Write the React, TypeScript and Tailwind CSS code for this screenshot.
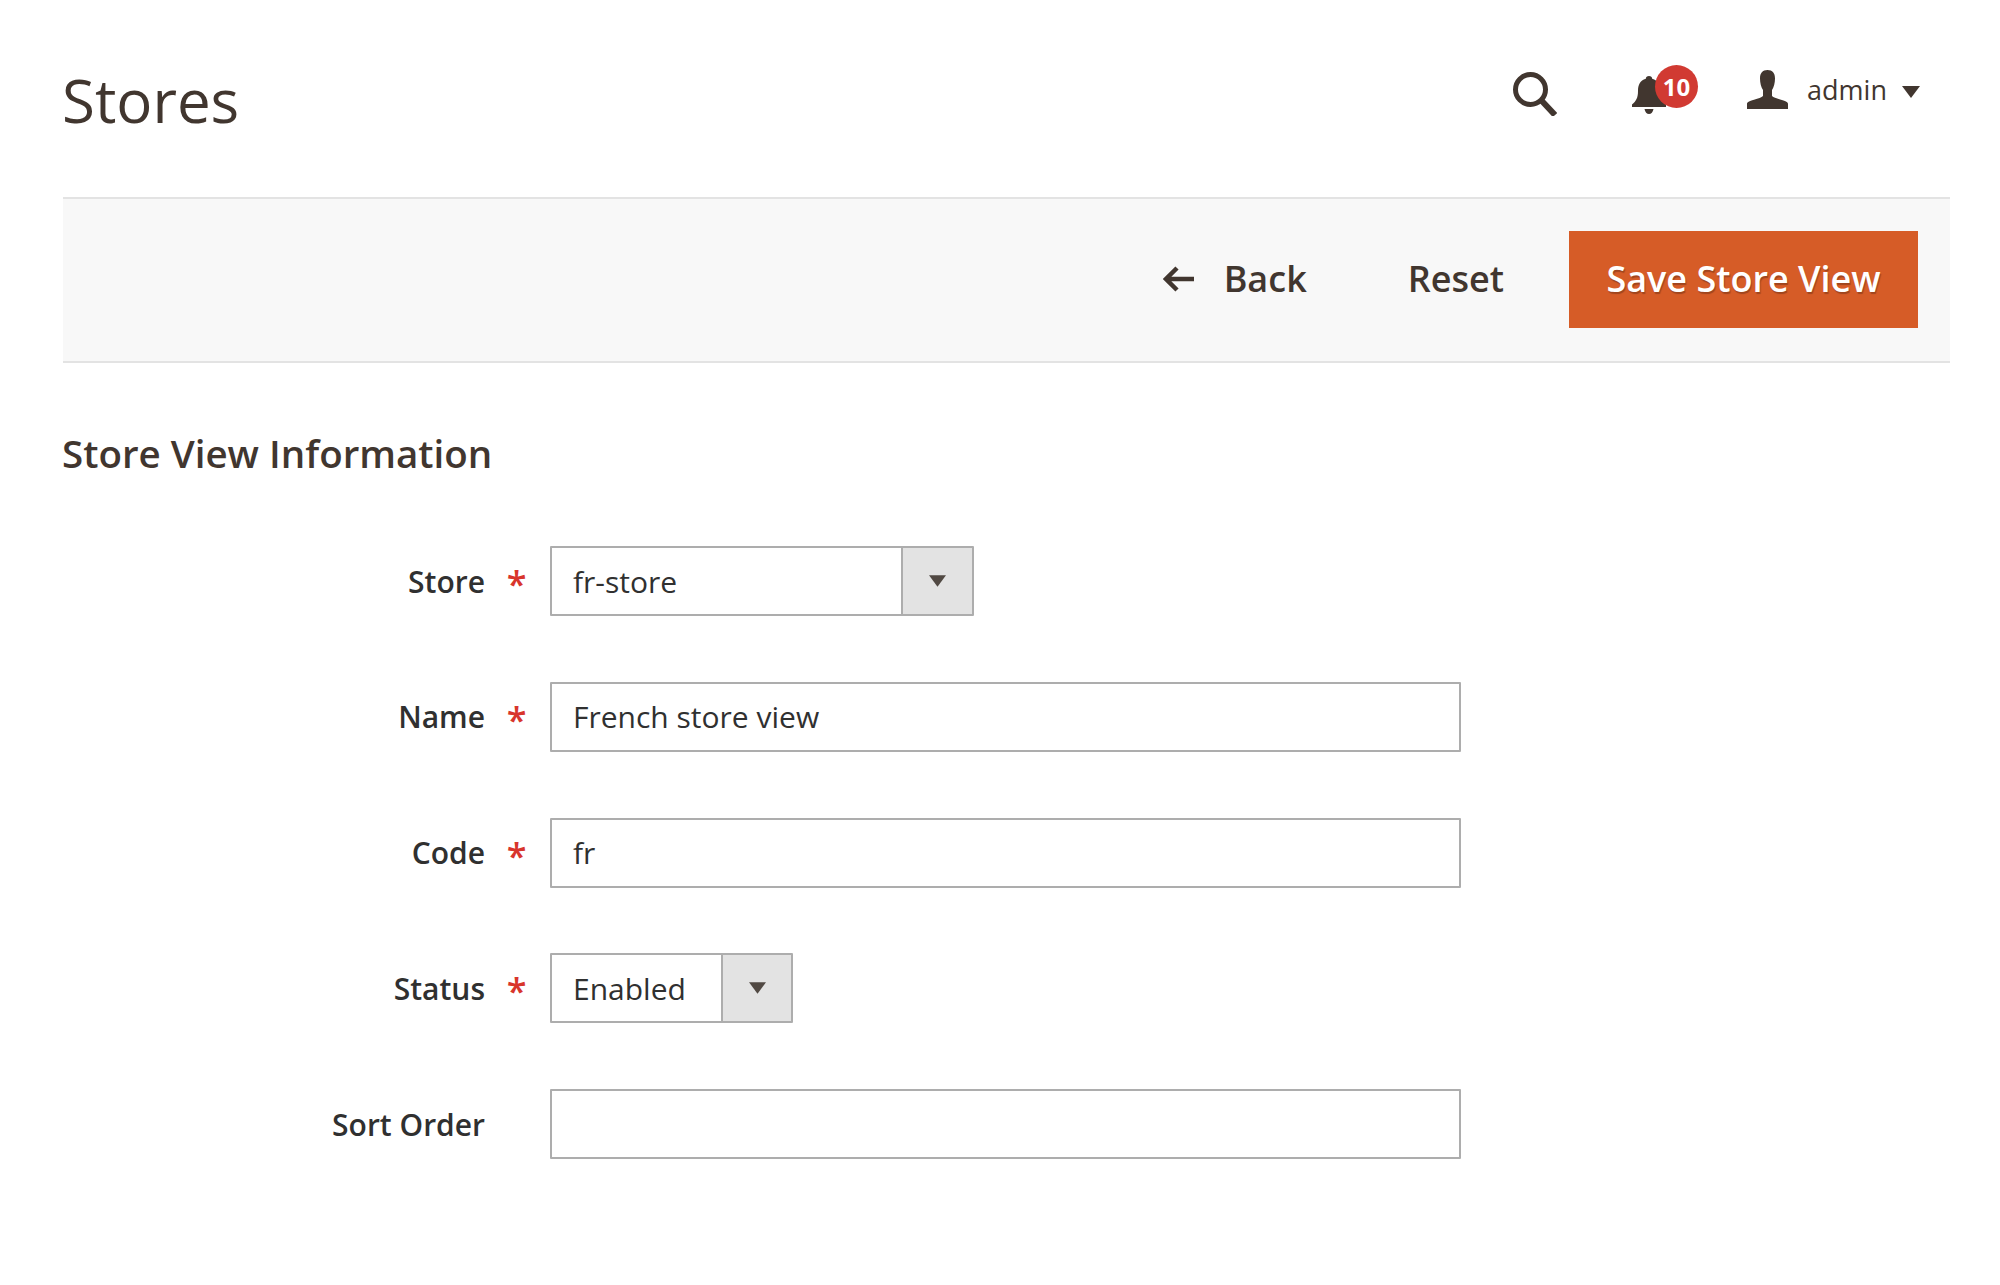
import React from "react"

const inputBox = "flex h-[70px] items-center rounded-[1px] border-2 border-[#adadad] bg-white pl-[21px] text-[30px] text-[#303030]"

function Caret({ className }: { className?: string }) {
  return (
    <svg viewBox="0 0 18 12" className={className} fill="currentColor">
      <path d="M0 0H18L9 12Z" />
    </svg>
  )
}

function SelectBox({ value, width, divider }: { value: string; width: string; divider: string }) {
  return (
    <div className={`flex h-[70px] items-stretch rounded-[1px] border-2 border-[#adadad] bg-white text-[30px] text-[#303030] ${width}`}>
      <div className={`flex items-center border-r-2 border-[#adadad] pl-[21px] ${divider}`}>{value}</div>
      <div className="flex flex-1 items-center justify-center bg-[#e3e3e3] text-[#514943]">
        <Caret className="h-[12px] w-[17px]" />
      </div>
    </div>
  )
}

function Row({ label, required, children }: { label: string; required?: boolean; children: React.ReactNode }) {
  return (
    <div className="flex items-center">
      <div className="w-[485px] text-right text-[30px] font-semibold text-[#303030]">{label}</div>
      <div className="flex w-[65px] justify-center pr-[2px] pt-[6px] text-[36px] leading-none font-semibold text-[#d8352c]">
        {required ? "*" : ""}
      </div>
      {children}
    </div>
  )
}

export default function App() {
  return (
    <div className="min-h-[1285px] bg-white font-['Open_Sans',sans-serif] text-[#41362f]">
      <header className="flex h-[197px] items-start pl-[62px] pr-[80px]">
        <h1 className="mt-[61px] text-[60px] leading-[78px] font-normal">Stores</h1>
        <div className="ml-auto mt-[65px] flex items-start">
          <svg viewBox="0 0 44 44" className="mt-[7px] h-[44px] w-[44px]" fill="none" stroke="currentColor">
            <circle cx="17.5" cy="17.5" r="15" strokeWidth="5" />
            <path d="M28 28L42 43" strokeWidth="6" />
          </svg>
          <div className="relative ml-[75px] h-[48px] w-[66px]">
            <svg viewBox="0 0 34 38" className="absolute left-0 top-[11px] h-[38px] w-[34px]" fill="currentColor">
              <path d="M17 0c2 0 3 1 3.2 2.8C26 4.4 28 9 28 15c0 7 2 10 6 13.500V31H0v-2.500C4 25 6 22 6 15 6 9 8 4.400 13.800 2.800 14 1 15 0 17 0Z" />
              <path d="M12.500 33h9c-.5 3-2.300 5-4.500 5s-4-2-4.500-5Z" />
            </svg>
            <span className="absolute left-[23px] top-0 flex h-[43px] w-[43px] items-center justify-center rounded-full bg-[#d13a32] text-[24px] leading-none font-bold text-white">
              10
            </span>
          </div>
          <svg viewBox="0 0 41 39" className="ml-[49px] mt-[5px] h-[39px] w-[41px]" fill="currentColor">
            <path d="M20.500 0c5 0 7.500 3 7.500 8.500 0 4.500-1.200 9-3 11.500v6c1.500 1.500 4.500 2.300 9 3.700 5 1.500 7 2.300 7 4.300V39H0v-5c0-2 2-2.800 7-4.300C11.500 28.300 14.500 27.500 16 26v-6c-1.800-2.500-3-7-3-11.500C13 3 15.500 0 20.500 0Z" />
          </svg>
          <span className="ml-[19px] mt-[3px] text-[27px] leading-[44px]">admin</span>
          <Caret className="ml-[15px] mt-[21px] h-[12px] w-[18px]" />
        </div>
      </header>

      <div className="ml-[63px] mr-[50px] flex h-[166px] items-center justify-end border-y-2 border-[#e3e3e3] bg-[#f8f8f8] pb-[2px] pr-[32px]">
        <svg viewBox="0 0 32 26" className="mr-[29px] h-[26px] w-[32px]" fill="none" stroke="currentColor" strokeWidth="4.5">
          <path d="M31 13H4M14 2L3 13l11 11" />
        </svg>
        <span className="text-[36px] font-semibold">Back</span>
        <span className="ml-[101px] text-[36px] font-semibold">Reset</span>
        <button className="ml-[65px] h-[97px] w-[349px] bg-[#d65c27] text-[36px] font-semibold text-white [text-shadow:1px_2px_1px_rgba(0,0,0,0.25)]">
          Save Store View
        </button>
      </div>

      <h2 className="ml-[62px] mt-[65px] text-[38.5px] leading-[50px] font-semibold">Store View Information</h2>

      <div className="mt-[68px] flex flex-col gap-[65.75px]">
        <Row label="Store" required>
          <SelectBox value="fr-store" width="w-[424px]" divider="w-[351px]" />
        </Row>
        <Row label="Name" required>
          <div className={`${inputBox} w-[911px]`}>French store view</div>
        </Row>
        <Row label="Code" required>
          <div className={`${inputBox} w-[911px]`}>fr</div>
        </Row>
        <Row label="Status" required>
          <SelectBox value="Enabled" width="w-[243px]" divider="w-[171px]" />
        </Row>
        <Row label="Sort Order">
          <div className={`${inputBox} w-[911px]`} />
        </Row>
      </div>
    </div>
  )
}
